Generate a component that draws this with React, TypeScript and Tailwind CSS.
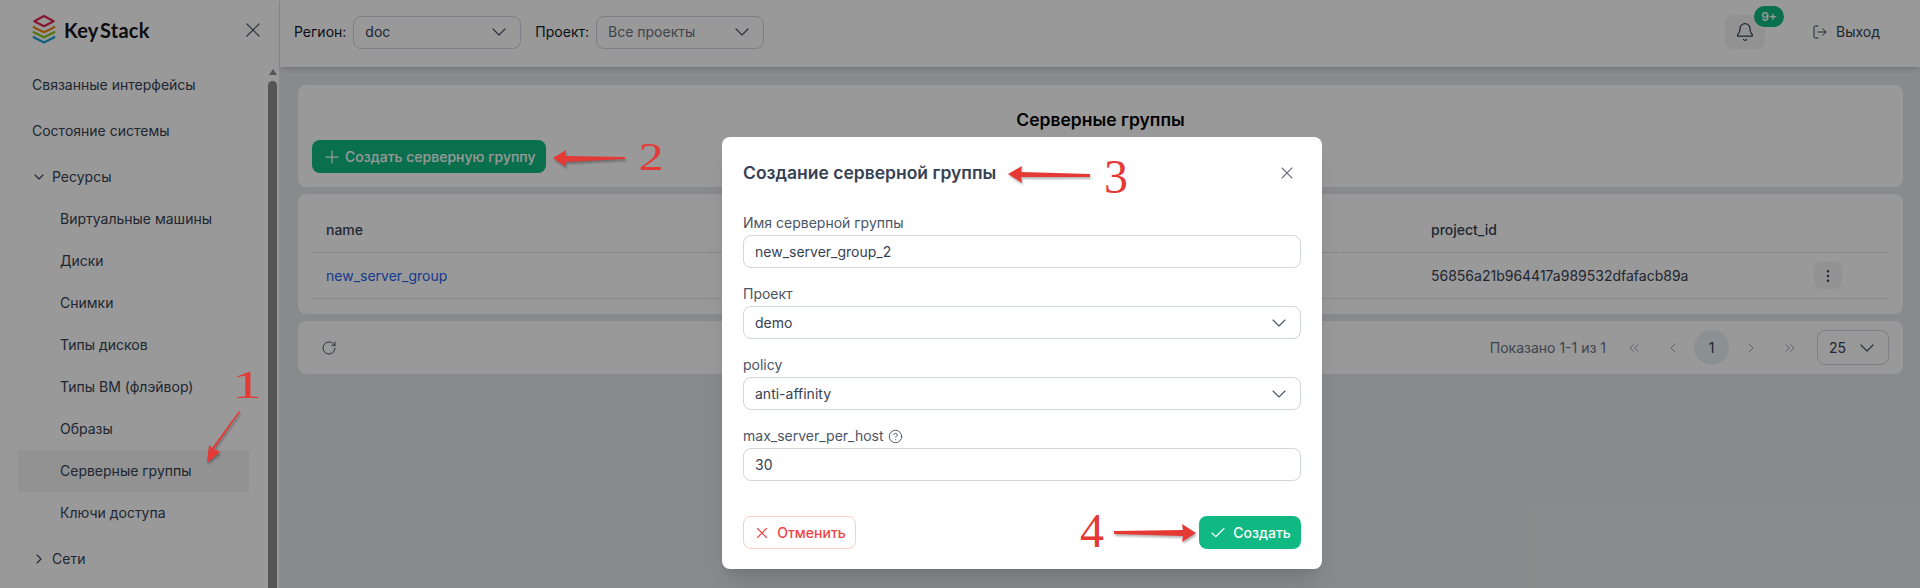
import { Bell, Check, ChevronDown, ChevronLeft, ChevronRight, ChevronsLeft, ChevronsRight, CircleHelp, EllipsisVertical, LogOut, Plus, RotateCw, X } from "lucide-react";

function Logo() {
  return (
    <svg width="24" height="30" viewBox="0 0 26 32" fill="none" strokeWidth="2.4" strokeLinejoin="round" className="shrink-0">
      <path d="M13 2 L23.5 7.5 L13 13 L2.5 7.5 Z" stroke="#e0244f" />
      <path d="M3 13 L1.8 14 L13 19.5 L24.2 14 L23 13" stroke="#ee8a1d" />
      <path d="M3 18.5 L1.8 19.5 L13 25 L24.2 19.5 L23 18.5" stroke="#8cc21f" />
      <path d="M3 24 L1.8 25 L13 30.5 L24.2 25 L23 24" stroke="#1f9fd8" />
    </svg>
  );
}

function NavItem({ label, sub, active, icon }: { label: string; sub?: boolean; active?: boolean; icon?: "down" | "right" }) {
  return (
    <div className={`flex h-[42px] items-center text-sm text-gray-700 ${sub ? "pl-[42px]" : "pl-[14px]"} ${active ? "bg-gray-100" : ""}`}>
      {icon === "down" && <ChevronDown size={16} strokeWidth={1.6} className="mr-[5px] -ml-[1px]" />}
      {icon === "right" && <ChevronRight size={16} strokeWidth={1.6} className="mr-[5px] -ml-[1px]" />}
      {label}
    </div>
  );
}

function SelectBox({ value, w, h = "h-[33px]", muted, text = "text-sm" }: { value: string; w: string; h?: string; muted?: boolean; text?: string }) {
  return (
    <div className={`flex ${w} ${h} items-center justify-between rounded-lg border border-gray-300 bg-white pl-[11px] pr-[9px] ${text} ${muted ? "text-gray-500" : "text-gray-700"}`}>
      <span>{value}</span>
      <ChevronDown size={24} strokeWidth={1.2} className="text-gray-600" />
    </div>
  );
}

function Field({ label, value, help, select }: { label: string; value: string; help?: boolean; select?: boolean }) {
  return (
    <div className="flex flex-col">
      <div className="mb-[2px] flex h-[20px] items-center gap-[4px] text-sm text-gray-600">
        {label}
        {help && <CircleHelp size={15} strokeWidth={1.5} />}
      </div>
      <div className="flex h-[33px] items-center justify-between rounded-lg border border-gray-300 pl-[11px] pr-[9px] text-sm text-gray-700">
        <span>{value}</span>
        {select && <ChevronDown size={24} strokeWidth={1.1} className="text-gray-600" />}
      </div>
    </div>
  );
}

function PageBtn({ children }: { children: React.ReactNode }) {
  return <div className="flex h-[35px] w-[39px] items-center justify-center text-gray-400">{children}</div>;
}

function Digit({ children, className }: { children: string; className: string }) {
  return <span className={`absolute leading-none text-[#e53935] [font-family:'Liberation_Serif',serif] ${className}`}>{children}</span>;
}

export default function App() {
  return (
    <div className="relative flex h-[588px] w-[1920px] overflow-hidden bg-[#e5e7eb] font-['Inter',sans-serif]">
      {/* Sidebar */}
      <aside className="flex w-[280px] shrink-0 flex-col border-r border-gray-200 bg-white">
        <div className="flex h-[64px] shrink-0 items-start pl-[32px] pr-[14px] pt-[14px]">
          <Logo />
          <span className="ml-[8px] mt-[3px] font-['Lato',sans-serif] text-[20px] font-bold leading-[26px] tracking-[0.2px] text-[#14141f] [word-spacing:-3px]">Key Stack</span>
          <X size={24} strokeWidth={1.2} className="ml-auto mt-[4px] text-gray-600" />
        </div>
        <div className="flex min-h-0 flex-1">
          <nav className="flex w-[249px] shrink-0 flex-col gap-1 pl-[18px]">
            <NavItem label="Связанные интерфейсы" />
            <NavItem label="Состояние системы" />
            <div className="flex flex-col">
              <NavItem label="Ресурсы" icon="down" />
              <NavItem sub label="Виртуальные машины" />
              <NavItem sub label="Диски" />
              <NavItem sub label="Снимки" />
              <NavItem sub label="Типы дисков" />
              <NavItem sub label="Типы ВМ (флэйвор)" />
              <NavItem sub label="Образы" />
              <NavItem sub active label="Серверные группы" />
              <NavItem sub label="Ключи доступа" />
            </div>
            <NavItem label="Сети" icon="right" />
          </nav>
          <div className="ml-[19px] flex w-[9px] flex-col items-center pt-[5px]">
            <div className="h-0 w-0 border-x-[4.5px] border-b-[6px] border-x-transparent border-b-[#8e8e8e]" />
            <div className="mt-[6px] w-full flex-1 rounded-t-full bg-[#8e8e8e]" />
          </div>
        </div>
      </aside>

      {/* Main */}
      <div className="flex min-w-0 flex-1 flex-col">
        <header className="z-10 flex h-[67px] shrink-0 items-center bg-white pb-[3px] pl-[14px] pr-[40px] text-sm text-gray-900 shadow-md">
          <span>Регион:</span>
          <div className="ml-[7px]"><SelectBox value="doc" w="w-[168px]" /></div>
          <span className="ml-[14px]">Проект:</span>
          <div className="ml-[7px]"><SelectBox value="Все проекты" w="w-[168px]" muted /></div>
          <div className="relative ml-auto flex h-[34px] w-[40px] items-center justify-center rounded-lg bg-gray-100 text-gray-700">
            <Bell size={20} strokeWidth={1.5} />
            <span className="absolute -right-[19px] -top-[9px] flex h-[21px] w-[30px] items-center justify-center rounded-full bg-[#10b981] text-xs font-semibold text-white">9+</span>
          </div>
          <div className="ml-[47px] flex items-center gap-[8px] text-gray-700">
            <LogOut size={16} strokeWidth={1.5} />
            <span>Выход</span>
          </div>
        </header>
        <main className="flex flex-col gap-[7px] pl-[18px] pr-[17px] pt-[18px]">
          <section className="h-[102px] rounded-lg bg-white px-[14px] pt-[23px]">
            <h1 className="text-center text-[17.5px] font-semibold leading-[24px] text-black">Серверные группы</h1>
            <button className="mt-[8px] flex h-[33px] w-[234px] items-center gap-[3px] rounded-lg bg-[#10b981] pl-[10px] text-sm font-medium text-white">
              <Plus size={20} strokeWidth={1.5} />
              Создать серверную группу
            </button>
          </section>
          <section className="h-[120px] rounded-lg bg-white px-[14px] pt-[15px] text-sm text-gray-700">
            <div className="flex h-[44px] items-center border-b border-gray-200 pb-[1px] pl-[14px] font-medium">
              <span className="w-[1105px]">name</span>
              <span>project_id</span>
            </div>
            <div className="flex h-[46px] items-center border-b border-gray-200 pl-[14px] pr-[47px]">
              <span className="w-[1105px] text-[#2563eb]">new_server_group</span>
              <span>56856a21b964417a989532dfafacb89a</span>
              <span className="ml-auto flex h-[27px] w-[28px] items-center justify-center rounded-md bg-gray-100 text-gray-700">
                <EllipsisVertical size={16} strokeWidth={1.8} />
              </span>
            </div>
          </section>
          <section className="flex h-[53px] items-center rounded-lg bg-white pl-[23px] pr-[14px] text-sm text-gray-500">
            <RotateCw size={16} strokeWidth={1.5} className="text-gray-600" />
            <span className="ml-auto mr-[8px]">Показано 1-1 из 1</span>
            <PageBtn><ChevronsLeft size={16} strokeWidth={1.5} /></PageBtn>
            <PageBtn><ChevronLeft size={16} strokeWidth={1.5} /></PageBtn>
            <div className="mx-[2px] flex h-[35px] w-[35px] items-center justify-center rounded-full bg-[#e8f0f4] text-gray-700">1</div>
            <PageBtn><ChevronRight size={16} strokeWidth={1.5} /></PageBtn>
            <PageBtn><ChevronsRight size={16} strokeWidth={1.5} /></PageBtn>
            <div className="ml-[8px]"><SelectBox value="25" w="w-[72px]" h="h-[35px]" /></div>
          </section>
        </main>
      </div>

      {/* Backdrop and dialog */}
      <div className="absolute inset-0 z-20 flex bg-black/40 pl-[722px] pt-[137px]">
        <div className="flex h-[432px] w-[600px] flex-col rounded-lg bg-white pl-[21px] pr-[21px] shadow-xl">
          <div className="flex h-[72px] shrink-0 items-center justify-between pr-[4px]">
            <h2 className="text-[17.5px] font-semibold text-gray-700">Создание серверной группы</h2>
            <X size={20} strokeWidth={1.3} className="text-gray-500" />
          </div>
          <div className="flex flex-col gap-[16px] pt-[4px]">
            <Field label="Имя серверной группы" value="new_server_group_2" />
            <Field label="Проект" value="demo" select />
            <Field label="policy" value="anti-affinity" select />
            <Field label="max_server_per_host" value="30" help />
          </div>
          <div className="mt-[35px] flex items-center justify-between text-sm font-medium">
            <button className="flex h-[33px] w-[113px] items-center justify-center gap-[6px] rounded-lg border border-[#fecaca] text-[#ef4444]">
              <X size={18} strokeWidth={1.5} />
              Отменить
            </button>
            <button className="flex h-[33px] w-[102px] items-center justify-center gap-[6px] rounded-lg bg-[#10b981] text-white">
              <Check size={18} strokeWidth={1.5} />
              Создать
            </button>
          </div>
        </div>
      </div>

      {/* Red annotations */}
      <div className="pointer-events-none absolute inset-0 z-30">
        <svg width="1920" height="588" className="absolute inset-0 drop-shadow-[1px_2px_1px_rgba(0,0,0,0.3)]" fill="#e53935">
          <polygon points="240,412 214,449 220,452 207,463 209,445 212,448 239,411" />
          <polygon points="553,158 566,150 565,156 625,157 625,159 565,162 566,167" />
          <polygon points="1008,174 1022,166 1021,172 1090,174 1090,177 1021,177 1022,183" />
          <polygon points="1114,531 1183,530 1182,524 1196,533 1182,542 1183,536 1114,534" />
        </svg>
        <Digit className="left-[237px] top-[365px] scale-x-[1.5] text-[40px]">1</Digit>
        <Digit className="left-[641px] top-[137px] scale-x-[1.25] text-[40px]">2</Digit>
        <Digit className="left-[1104px] top-[153px] text-[48px]">3</Digit>
        <Digit className="left-[1080px] top-[507px] text-[48px]">4</Digit>
      </div>
    </div>
  );
}
